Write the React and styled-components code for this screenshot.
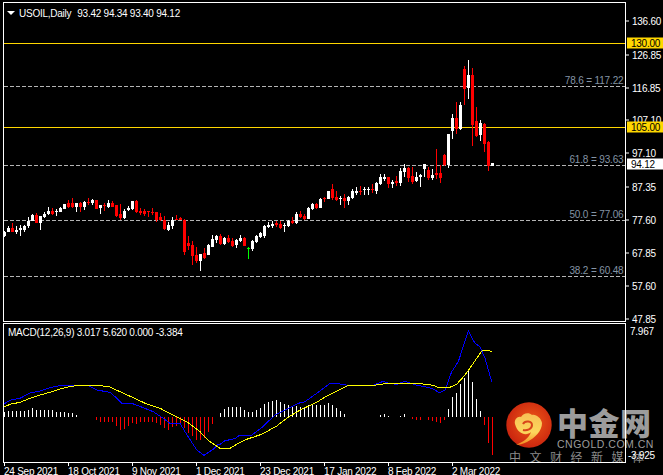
import React from "react";
import styled, { createGlobalStyle } from "styled-components";

const GlobalStyle = createGlobalStyle`
  html, body {
    margin: 0;
    padding: 0;
    background: #000;
  }
`;

const UI_FONT = `"Liberation Sans", Arial, sans-serif`;
const RED = "#ff0000";
const GOLD = "#ffd700";

// candles read off the chart at 3x: [up, bodyTop, bodyBottom, high, low]
const W = 1;
const R = 0;
const CROP_A = [
  [W,185,198,182,200],[W,175,186,169,187],[R,175,186,160,186],[W,180,187,168,191],[W,174,180,166,197],
  [W,168,180,165,186],[W,152,168,142,174],[W,135,152,132,153],[R,136,159,130,159],[W,139,158,139,180],
  [W,132,142,126,144],[W,123,132,111,135],[R,123,131,114,136],[W,123,125,117,137],[W,115,125,111,127],
  [W,102,116,102,117],[R,99,112,90,115],[R,99,112,84,115],[W,99,111,99,126],[R,98,110,96,126],
  [W,96,111,93,120],[R,97,99,84,104],[W,90,99,87,105],[R,90,117,90,117],[W,105,115,105,132],
  [R,104,109,100,123],[W,99,111,90,115],[R,99,110,93,111],[R,105,137,105,141],[R,132,145,102,150],
  [W,123,145,117,147],[W,113,120,109,122],[W,93,117,93,119],[R,93,125,90,129],[R,124,128,114,135],
  [R,123,131,117,137],[R,124,126,124,141],[R,125,127,114,135],[R,126,150,126,156],[R,141,150,129,153],
  [R,150,177,138,181],[W,165,180,156,183],[W,150,168,141,177],[R,146,148,136,150],[R,143,149,141,150],
  [R,150,246,147,255],[R,219,228,198,240],[R,225,258,213,285],[R,254,272,231,279],[W,252,273,252,303],
  [R,249,263,234,267],[W,225,255,222,255],[W,207,231,195,232],[W,198,211,195,219],
];
const CROP_B = [
  [R,258,283,252,285],[W,264,282,262,286],[R,263,277,255,280],[R,273,287,265,292],[W,270,285,266,294],
  [W,264,273,255,276],[R,264,288,262,288],[2,295,296,291,327],[W,273,297,270,303],[W,258,276,255,279],
  [W,249,260,246,265],[W,228,258,225,264],[W,224,231,216,235],[W,222,229,214,234],[R,218,226,213,231],
  [R,221,234,213,237],[W,225,229,219,246],[W,213,228,210,231],[R,213,218,201,222],[W,192,219,186,222],
  [R,192,201,183,205],[R,197,207,192,210],[W,174,207,171,207],[W,162,177,159,180],[R,162,174,159,177],
  [W,147,174,144,174],[R,144,146,141,156],[W,123,147,123,147],[R,117,144,102,150],[R,141,150,123,153],
  [W,144,146,138,165],[R,144,153,132,174],[W,141,153,138,165],[W,123,144,117,147],[W,123,129,111,135],
  [R,122,124,108,135],[W,116,121,112,135],[W,116,118,111,135],[R,117,120,102,129],[W,99,123,96,132],
  [W,81,102,72,105],[W,81,87,72,93],[R,81,102,81,114],[W,96,102,90,114],[R,93,100,78,108],
  [W,63,99,54,108],[W,54,66,42,81],[R,54,84,51,96],[R,78,96,51,102],[W,81,93,66,96],
  [W,75,81,72,111],[W,42,57,42,81],[R,60,84,51,90],[W,75,84,57,90],
];
const CROP_C = [
  [R,429,435,357,447],[R,429,444,405,459],[R,375,405,372,408],[W,312,405,312,414],[W,264,303,252,327],
  [R,264,297,216,312],[W,225,297,216,300],[R,117,177,108,225],[W,135,173,90,207],[R,135,285,114,348],
  [R,273,318,231,321],[W,279,315,270,333],[R,282,342,279,366],[R,336,408,333,423],[W,400,409,400,409],
];

const toPx = (base, rows) =>
  rows.map(([kind, top, bottom, high, low]) => ({
    kind,
    top: Math.round(base + top / 3),
    bottom: Math.round(base + bottom / 3),
    high: Math.round(base + high / 3),
    low: Math.round(base + low / 3),
  }));

const candles = [...toPx(170, CROP_A), ...toPx(150, CROP_B), ...toPx(30, CROP_C)];

// histogram ends, y at 3x from 315; above 305 is a white bar, below it a red one
const HIST = [
  292,289,289,289,289,289,286,280,286,286,286,286,286,292,292,292,295,295,300,null,null,307,307,316,322,
  322,322,322,334,345,342,334,325,328,322,322,322,322,325,331,340,345,337,334,328,340,355,364,376,376,
  370,352,328,null,295,283,277,277,277,277,286,292,292,286,280,268,262,259,256,262,268,271,277,274,277,
  280,271,268,271,271,271,265,271,280,289,298,null,null,null,307,null,null,307,null,301,298,303,null,307,
  303,298,null,313,316,316,307,316,319,322,325,316,283,247,235,208,190,163,202,253,289,329,383,419,
];

const trace = (ox, oy, pts) => pts.map(([x, y]) => [ox + x / 3, oy + y / 3]);

const signalLine = [
  ...trace(0, 315, [[13,276],[30,268],[60,262],[90,250],[120,240],[150,232],[180,222],[205,216],[235,211],[295,211],[330,216],[360,230],[400,248],[440,267],[480,280],[520,300],[560,320],[600,350],[630,380],[655,397]]),
  ...trace(220, 315, [[0,400],[30,400],[50,388],[80,373],[125,358],[170,333],[200,310],[240,285],[290,262],[320,243],[350,228],[380,213],[395,211],[460,211],[490,207],[590,205],[640,211],[655,218]]),
  ...trace(440, 315, [[0,217],[25,219],[50,208],[75,180],[100,145],[125,108],[140,105],[155,110]]),
];

const macdLine = [
  ...trace(0, 315, [[13,266],[30,256],[60,250],[90,234],[120,228],[150,218],[190,210],[235,210],[265,212],[290,225],[330,232],[345,245],[365,265],[395,265],[430,278],[460,290],[490,310],[510,325],[540,325],[555,350],[590,405],[612,421],[640,403],[655,388]]),
  ...trace(220, 315, [[0,388],[15,377],[45,371],[60,360],[95,360],[125,338],[165,300],[200,282],[235,265],[255,260],[290,235],[330,205],[345,205],[385,211],[460,211],[490,199],[505,205],[530,208],[555,199],[590,211],[610,214],[640,222],[655,231]]),
  ...trace(440, 315, [[0,232],[15,226],[35,170],[55,140],[85,48],[105,85],[120,95],[135,130],[155,200]]),
];

const levels = [
  { y: 86, label: "78.6 = 117.22" },
  { y: 165, label: "61.8 = 93.63" },
  { y: 220, label: "50.0 = 77.06" },
  { y: 276, label: "38.2 = 60.48" },
];

const priceTicks = [
  ["136.60", 21], ["126.85", 55], ["116.85", 88], ["107.10", 120], ["97.10", 153],
  ["87.35", 187], ["77.60", 220], ["67.85", 253], ["57.60", 286], ["47.85", 319],
];

const dates = ["24 Sep 2021", "18 Oct 2021", "9 Nov 2021", "1 Dec 2021", "23 Dec 2021", "17 Jan 2022", "8 Feb 2022", "2 Mar 2022"];

const points = (list) => list.map(([x, y]) => `${x.toFixed(1)},${y.toFixed(1)}`).join(" ");
const candleColor = (kind) => (kind === W ? "#fff" : kind === R ? RED : "#00ff00");

const Screen = styled.div`
  position: relative;
  width: 663px;
  height: 475px;
  overflow: hidden;
  background: #000;
  padding: 2px 0 0 3px;
  box-sizing: border-box;
  font-family: ${UI_FONT};
  font-size: 10px;
  letter-spacing: -0.25px;
  color: #fff;
`;

const PaneRow = styled.div`
  position: relative;
  z-index: 1;
  display: flex;
  height: ${(p) => p.$height}px;
  margin-bottom: 1px;
`;

const Pane = styled.div`
  position: relative;
  width: 623px;
  box-sizing: border-box;
  border: 1px solid #fff;
  flex: none;
`;

const Plot = styled.svg`
  display: block;
  width: 621px;
  height: 100%;
  shape-rendering: crispEdges;
`;

const Legend = styled.div`
  position: absolute;
  top: ${(p) => p.$top}px;
  left: ${(p) => p.$left}px;
  display: flex;
  gap: 6px;
  white-space: nowrap;
  line-height: 11px;
`;

const Caret = styled.span`
  position: absolute;
  top: 8px;
  left: 3px;
  width: 0;
  height: 0;
  border-left: 4px solid transparent;
  border-right: 4px solid transparent;
  border-top: 4px solid #fff;
`;

const LevelLabel = styled.text`
  fill: #8494a5;
  font-family: ${UI_FONT};
  font-size: 10px;
  letter-spacing: -0.15px;
  text-anchor: end;
  shape-rendering: auto;
`;

const PriceAxis = styled.div`
  position: relative;
  flex: 1;
`;

const Tick = styled.div`
  position: absolute;
  left: 0;
  top: ${(p) => p.$top}px;
  display: flex;
  align-items: center;
  gap: 3px;
  height: 11px;
  line-height: 11px;
  transform: translateY(-50%);

  &::before {
    content: "";
    width: 3px;
    height: 1px;
    background: #fff;
  }
`;

const ScaleLabel = styled.div`
  position: absolute;
  left: ${(p) => p.$left}px;
  top: ${(p) => p.$top}px;
  line-height: 11px;
  transform: translateY(-50%);
`;

const PriceTag = styled.div`
  position: absolute;
  left: 1px;
  right: 0;
  top: ${(p) => p.$top}px;
  height: 11px;
  line-height: 11px;
  padding-left: 4px;
  background: ${(p) => p.$bg};
  color: #000;
  transform: translateY(-50%);
`;

const TimeAxis = styled.div`
  position: relative;
  z-index: 1;
  display: flex;
  padding-left: 1px;
  margin-top: -1px;
`;

const TimeCell = styled.div`
  position: relative;
  flex: none;
  width: 64px;
  line-height: 10px;
  white-space: nowrap;

  &::before {
    content: "";
    display: block;
    width: 1px;
    height: 3px;
    margin-bottom: 1px;
    background: #fff;
  }
`;

const Watermark = styled.div`
  position: absolute;
  left: 506px;
  top: 402px;
  z-index: 0;
  display: grid;
  grid-template-columns: 46px auto;
  column-gap: 5px;
  color: #9c9c9c;
`;

const Logo = styled.svg`
  display: block;
  width: 46px;
  height: 46px;
`;

const Brand = styled.div`
  font-family: "Noto Sans CJK SC", sans-serif;
  font-weight: 900;
  font-size: 31px;
  line-height: 34px;
  letter-spacing: 0.5px;
  white-space: nowrap;
  margin-top: 3px;
`;

const BrandSite = styled.div`
  font-family: ${UI_FONT};
  font-size: 10.5px;
  line-height: 10px;
  letter-spacing: 0.5px;
  white-space: nowrap;
`;

const Slogan = styled.div`
  grid-column: 1 / 3;
  margin: 1px 0 0 3px;
  font-family: "Noto Sans CJK SC", sans-serif;
  font-size: 12px;
  line-height: 14px;
  letter-spacing: 8.5px;
  white-space: nowrap;
  color: #8a8a8a;
`;

function GoldLogo() {
  return (
    <Logo viewBox="1 2 46 46">
      <defs>
        <radialGradient id="disc" cx="0.55" cy="0.45" r="0.6">
          <stop offset="0" stopColor="#ef5a18" />
          <stop offset="1" stopColor="#c8220e" />
        </radialGradient>
        <linearGradient id="cloud" x1="0" y1="0" x2="0" y2="1">
          <stop offset="0" stopColor="#f7bf55" />
          <stop offset="0.6" stopColor="#fcd75c" />
          <stop offset="1" stopColor="#f28a20" />
        </linearGradient>
      </defs>
      <circle cx="24" cy="25" r="22.7" fill="url(#disc)" />
      <path
        d="M10 24 C9 19 13 16 16 17 C18 13 24 12 27 15 C31 14 36 18 37 23 C37 31 30 38 22 42 C18 44 14 45 11 45 C18 42 24 38 26 32 C22 36 13 35 10 24 Z"
        fill="url(#cloud)"
      />
      <path d="M18 24 C20 20 27 21 27 25 C27 29 22 31 18 30" fill="none" stroke="#d8451a" strokeWidth="2" />
    </Logo>
  );
}

export default function App() {
  return (
    <>
      <GlobalStyle />
      <Screen>
        <Watermark>
          <GoldLogo />
          <div>
            <Brand>中金网</Brand>
            <BrandSite>CNGOLD.COM.CN</BrandSite>
          </div>
          <Slogan>中文财经新媒体</Slogan>
        </Watermark>

        <PaneRow $height={320}>
          <Pane>
            <Plot viewBox="4 3 621 318">
              <line x1="4" x2="625" y1="43.5" y2="43.5" stroke={GOLD} />
              <line x1="4" x2="625" y1="127.5" y2="127.5" stroke={GOLD} />
              {levels.map((level) => (
                <g key={level.y}>
                  <line x1="4" x2="625" y1={level.y + 0.5} y2={level.y + 0.5} stroke="#b4b4b4" strokeDasharray="4 2" />
                  <LevelLabel x="623.5" y={level.y - 2}>{level.label}</LevelLabel>
                </g>
              ))}
              {candles.map((c, i) => {
                const x = 4 + 4 * i;
                const color = candleColor(c.kind);
                return (
                  <g key={i} fill={color}>
                    <rect x={x} y={c.high} width="1" height={c.low - c.high} />
                    <rect x={x - 1} y={c.top} width="3" height={Math.max(c.bottom - c.top, 1)} />
                  </g>
                );
              })}
            </Plot>
            <Caret />
            <Legend $top={5} $left={15}>
              <span>USOIL,Daily</span>
              <span>93.42 94.34 93.40 94.12</span>
            </Legend>
          </Pane>
          <PriceAxis>
            {priceTicks.map(([text, y]) => (
              <Tick key={text} $top={y - 2}>{text}</Tick>
            ))}
            <PriceTag $top={41} $bg={GOLD}>130.00</PriceTag>
            <PriceTag $top={125} $bg={GOLD}>105.00</PriceTag>
            <PriceTag $top={162} $bg="#fff">94.12</PriceTag>
          </PriceAxis>
        </PaneRow>

        <PaneRow $height={140}>
          <Pane>
            <Plot viewBox="4 324 621 138">
              {HIST.map((end, i) => {
                if (end === null) return null;
                const y = Math.round(315 + end / 3);
                const up = end < 305;
                return (
                  <rect key={i} x={4 + 4 * i} y={up ? y : 417} width="1" height={up ? 417 - y : y - 417} fill={up ? "#fff" : RED} />
                );
              })}
              <polyline points={points(macdLine)} fill="none" stroke="#0000ff" />
              <polyline points={points(signalLine)} fill="none" stroke="#ffff00" />
            </Plot>
            <Legend $top={3} $left={4}>
              <span>MACD(12,26,9) 3.017 5.620 0.000 -3.384</span>
            </Legend>
          </Pane>
          <PriceAxis>
            <ScaleLabel $left={4} $top={8}>7.967</ScaleLabel>
            <ScaleLabel $left={2} $top={132}>-3.925</ScaleLabel>
          </PriceAxis>
        </PaneRow>

        <TimeAxis>
          {dates.map((date) => (
            <TimeCell key={date}>{date}</TimeCell>
          ))}
        </TimeAxis>
      </Screen>
    </>
  );
}
